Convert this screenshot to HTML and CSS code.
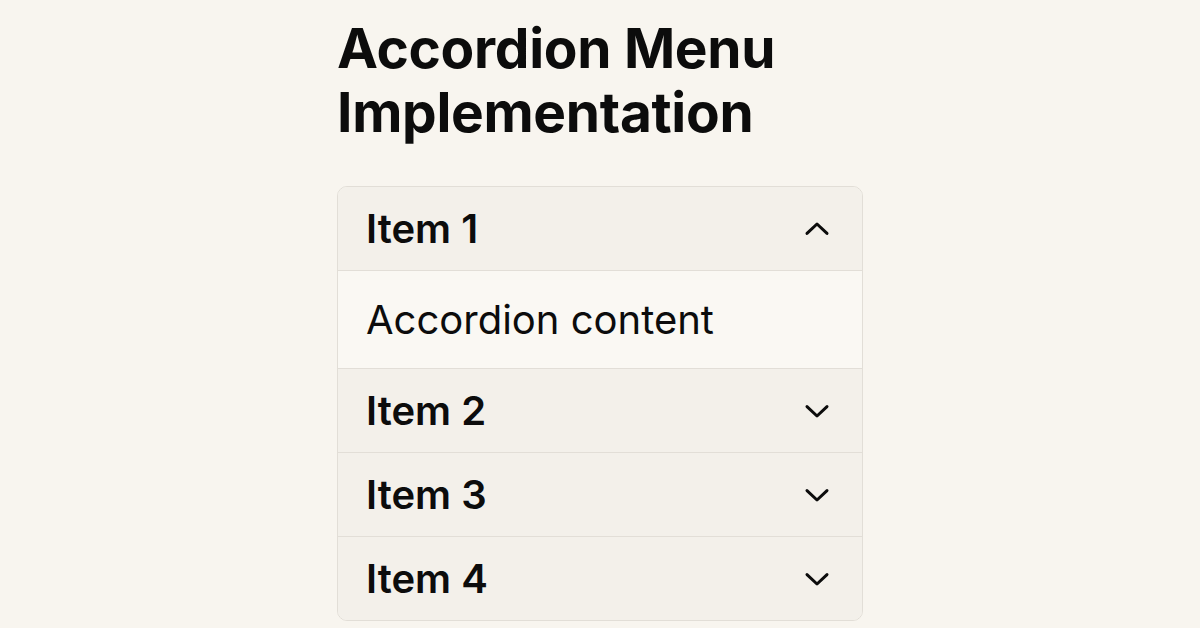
FILE: index.html
```html
<!DOCTYPE html>
<html lang="en">

<head>
    <meta charset="utf-8">
    <meta name="viewport" content="width=device-width, initial-scale=1.0">
    <title>Accordion Menu Implementation</title>
    <link rel="stylesheet" href="styles.css">
</head>

<body>
    <main class="page">
        <h1>Accordion Menu Implementation</h1>
        <div class="accordion">
            <div class="item open">
                <button class="head">
                    <span>Item 1</span>
                    <svg viewBox="0 0 24 24" width="30" height="30"><path d="M4 15.5 L12 8 L20 15.5"/></svg>
                </button>
                <div class="body">Accordion content</div>
            </div>
            <div class="item">
                <button class="head">
                    <span>Item 2</span>
                    <svg viewBox="0 0 24 24" width="30" height="30"><path d="M4 8.5 L12 16 L20 8.5"/></svg>
                </button>
            </div>
            <div class="item">
                <button class="head">
                    <span>Item 3</span>
                    <svg viewBox="0 0 24 24" width="30" height="30"><path d="M4 8.5 L12 16 L20 8.5"/></svg>
                </button>
            </div>
            <div class="item">
                <button class="head">
                    <span>Item 4</span>
                    <svg viewBox="0 0 24 24" width="30" height="30"><path d="M4 8.5 L12 16 L20 8.5"/></svg>
                </button>
            </div>
        </div>
    </main>
</body>

</html>
```

FILE: styles.css
```css
body {
    background: #f8f5ef;
    color: #0c0c0c;
    font-family: Inter, "Noto Sans", sans-serif;
    margin: 0;
}

.page {
    margin: 0 auto;
    padding-top: 16px;
    width: 526px;
}

h1 {
    font-size: 55px;
    font-weight: 700;
    letter-spacing: -0.3px;
    line-height: 64px;
    margin: 0 0 42px;
}

.accordion {
    border: 1px solid #e2ded7;
    border-radius: 10px;
    overflow: hidden;
}

.item + .item {
    border-top: 1px solid #e2ded7;
}

.head {
    align-items: center;
    background: #f3f0ea;
    border: 0;
    color: #0c0c0c;
    display: flex;
    font-family: inherit;
    font-size: 40px;
    font-weight: 600;
    height: 83px;
    justify-content: space-between;
    padding: 0 30px 0 28px;
    width: 100%;
}

.head svg {
    fill: none;
    stroke: #0c0c0c;
    stroke-linecap: round;
    stroke-linejoin: round;
    stroke-width: 2.4;
}

.body {
    background: #faf8f3;
    border-top: 1px solid #e2ded7;
    font-size: 40px;
    line-height: 97px;
    padding: 0 28px;
}
```
